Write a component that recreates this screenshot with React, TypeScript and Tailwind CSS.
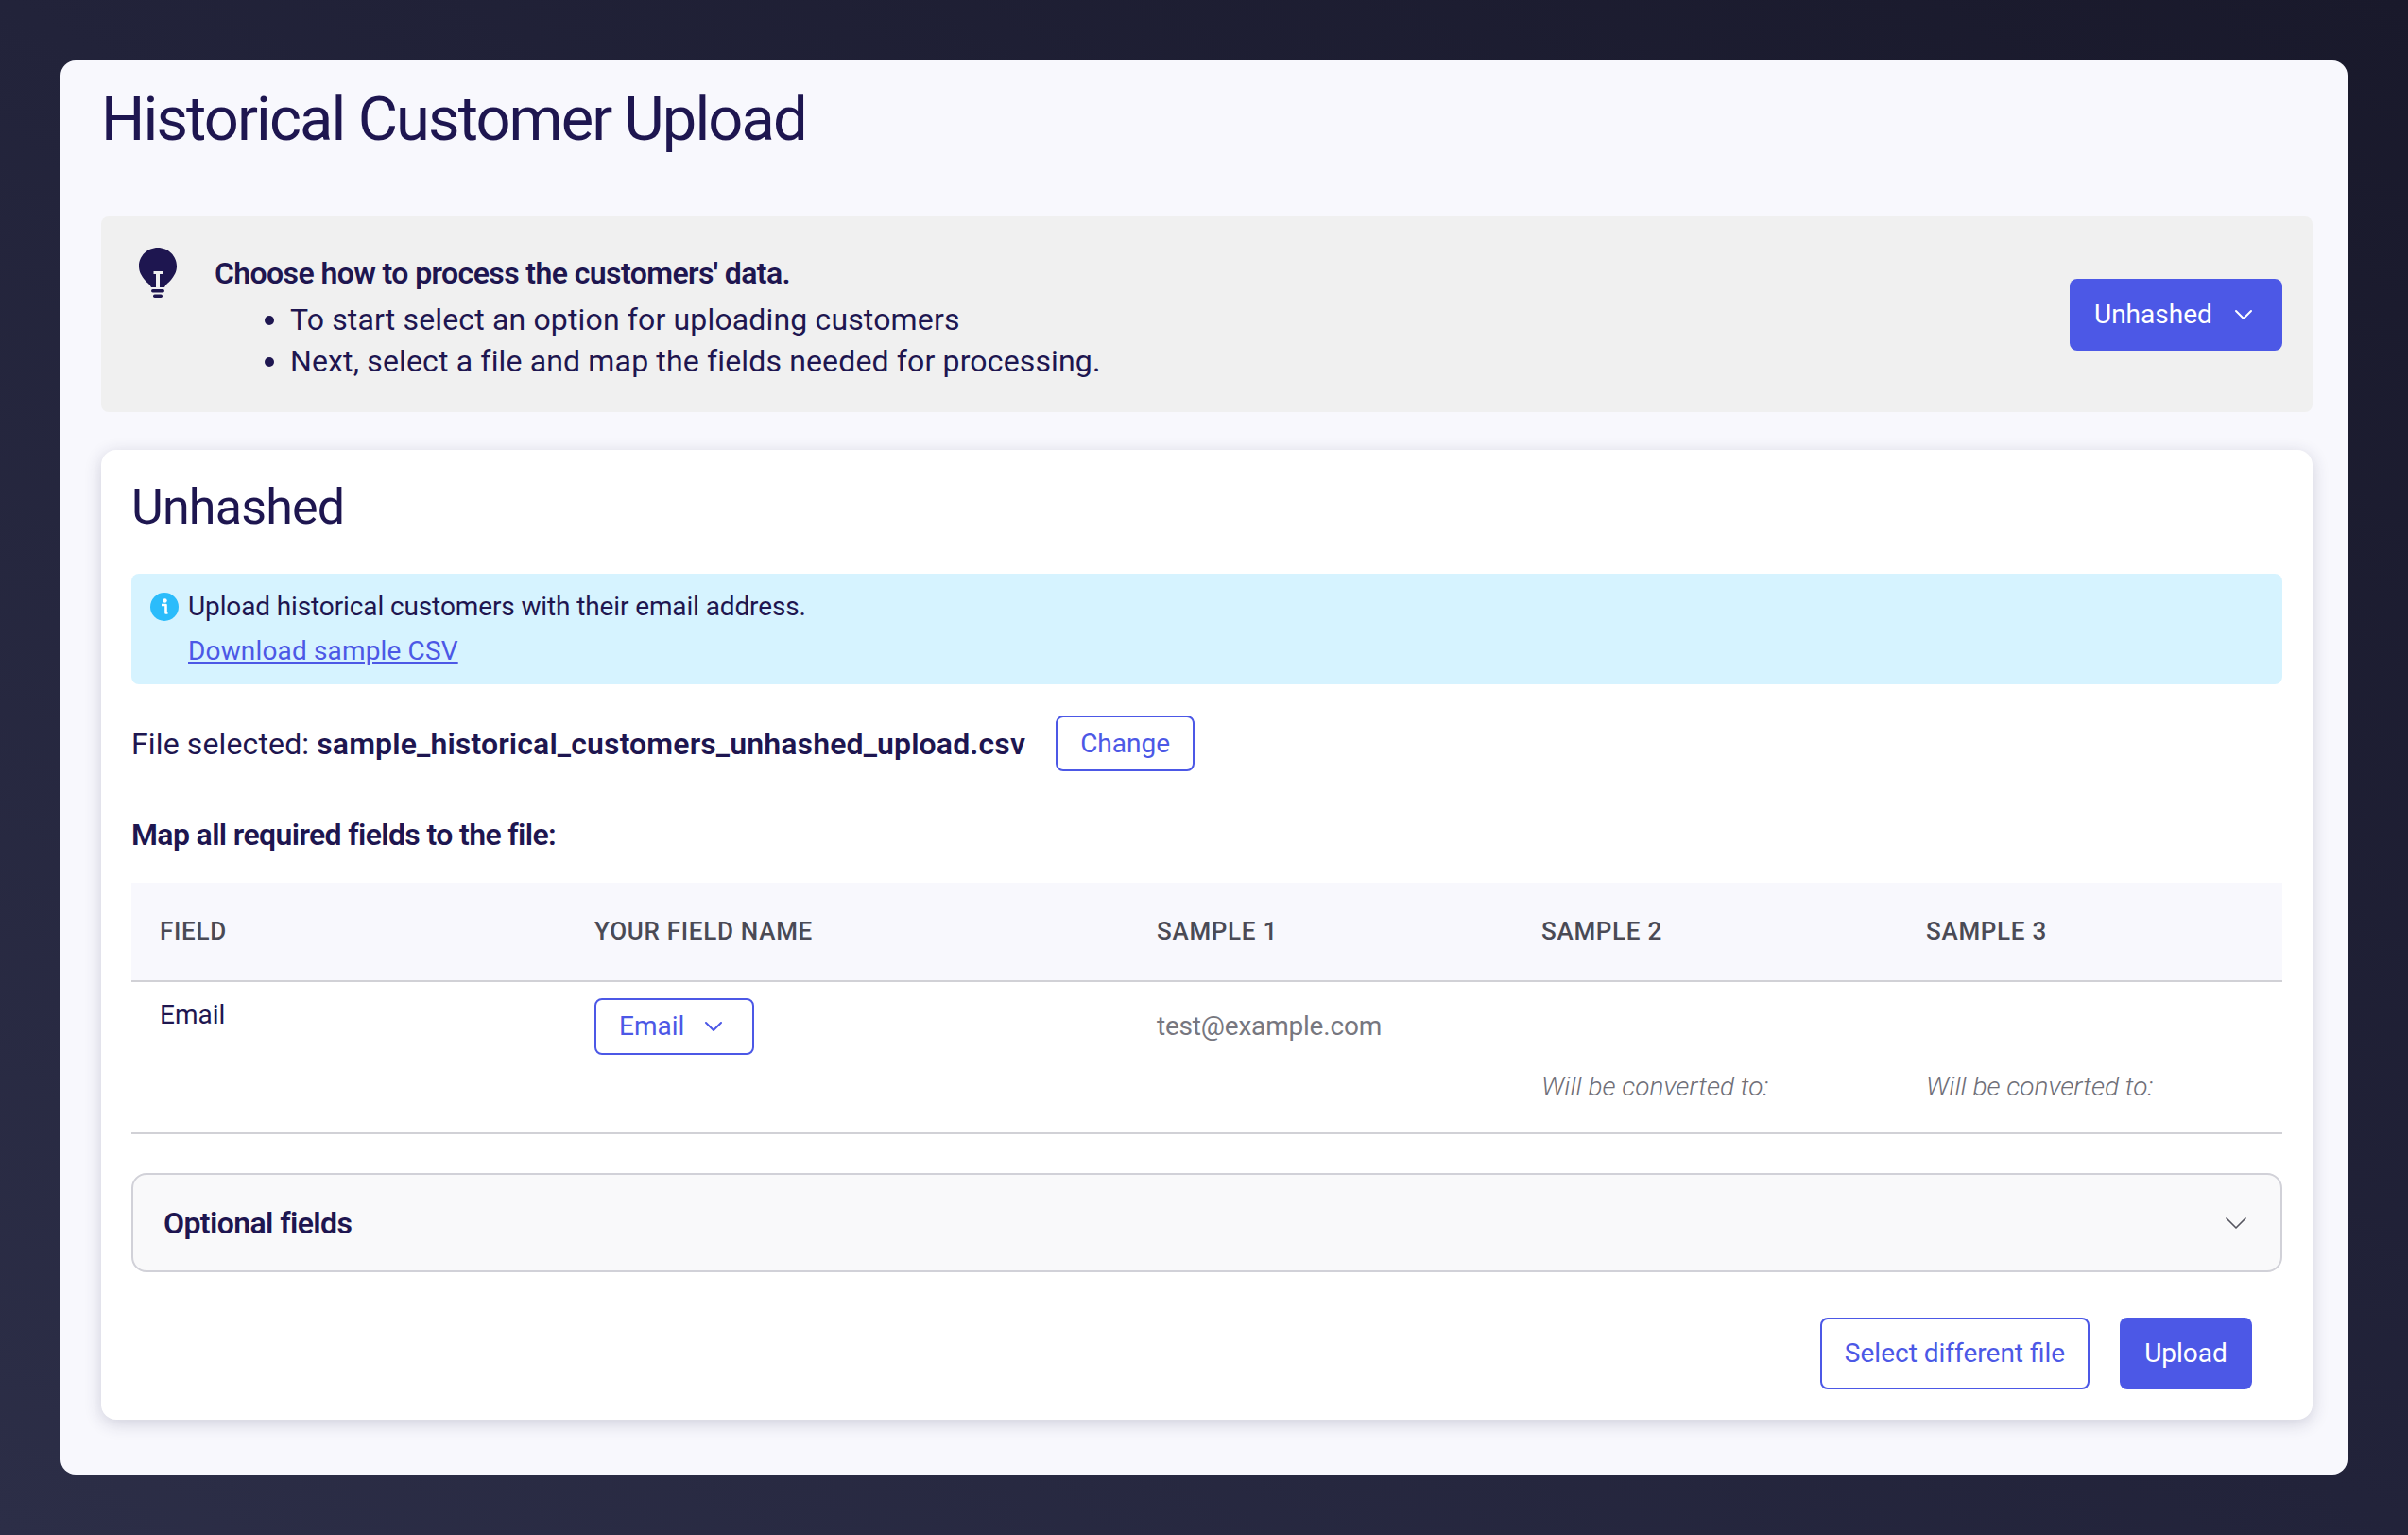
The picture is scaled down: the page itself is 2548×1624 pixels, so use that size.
import { FC } from 'react';
import { ChevronDown } from 'lucide-react';

const Bulb: FC = () => (
  <svg viewBox="0 0 40 54" className="w-[40px] h-[54px] shrink-0" fill="#1e1650">
    <path d="M20 0C9 0 0 8.800 0 19.500c0 6.500 3 10.500 6 14.500 2.500 3.300 6 5 7 8h14c1-3 4.500-4.700 7-8 3-4 6-8 6-14.500C40 8.800 31 0 20 0z" />
    <path d="M15.500 25h9.500v3h-3v14h-4V28h-2.500z" fill="#f0f0f0" />
    <rect x="13" y="44" width="14" height="3.500" rx="1.700" />
    <rect x="15" y="49.500" width="10" height="3.500" rx="1.700" />
  </svg>
);

const InfoIcon: FC = () => (
  <svg viewBox="0 0 30 30" className="w-[30px] h-[30px] shrink-0">
    <circle cx="15" cy="15" r="15" fill="#2bbcfb" />
    <circle cx="15.500" cy="8.500" r="2.200" fill="#fff" />
    <path d="M12 13h4.500v8.500h2" fill="none" stroke="#fff" strokeWidth="2.600" strokeLinejoin="round" />
  </svg>
);

const App: FC = () => {
  return (
    <div className="h-[1624px] w-full overflow-hidden bg-gradient-to-tr from-[#2c2e47] via-[#22233a] to-[#19192b] p-[64px] font-['Roboto',sans-serif] text-[28px] text-[#1e1650]">
      <div className="h-[1496px] rounded-[16px] bg-[#f8f8fd] pl-[43px] pr-[37px]">
        <h1 className="pt-[24px] mb-[65px] text-[65px] leading-[76px] font-normal tracking-[-1.9px]">Historical Customer Upload</h1>

        <div className="flex items-center justify-between h-[207px] rounded-[8px] bg-[#f0f0f0] pr-[32px]">
          <div className="flex self-start text-[32px]">
            <div className="pt-[33px] pl-[40px]"><Bulb /></div>
            <div className="pt-[38px] pl-[40px] leading-[44px]">
              <p className="font-semibold tracking-[-0.6px]">Choose how to process the customers' data.</p>
              <ul className="list-disc mt-[5px] pl-[80px] tracking-[0.15px]">
                <li className="leading-[44px]">To start select an option for uploading customers</li>
                <li className="leading-[44px]">Next, select a file and map the fields needed for processing.</li>
              </ul>
            </div>
          </div>
          <button className="flex items-center h-[76px] w-[225px] pl-[26px] gap-[17px] rounded-[8px] bg-[#4c58e6] text-white font-normal">
            Unhashed
            <ChevronDown className="w-[32px] h-[32px]" strokeWidth={1.500} />
          </button>
        </div>

        <div className="mt-[40px] h-[1026px] rounded-[16px] bg-white px-[32px] shadow-[0_4px_18px_rgba(40,40,80,0.2)]">
          <h2 className="pt-[30px] mb-[39px] text-[52px] leading-[62px] font-normal tracking-[-0.8px]">Unhashed</h2>

          <div className="h-[117px] rounded-[8px] bg-[#d6f3ff] pl-[20px] pt-[15px]">
            <div className="flex items-center gap-[10px] leading-[40px]">
              <InfoIcon />
              <span className="tracking-[-0.12px]">Upload historical customers with their email address.</span>
            </div>
            <a className="block ml-[40px] mt-[7px] leading-[40px] text-[#4c58e6] underline tracking-[0.15px]">Download sample CSV</a>
          </div>

          <div className="mt-[33px] flex items-center">
            <p className="text-[32px] tracking-[0.13px]">File selected: <span className="font-semibold">sample_historical_customers_unhashed_upload.csv</span></p>
            <button className="ml-[32px] h-[59px] w-[147px] rounded-[8px] border-2 border-[#4c58e6] text-[#4c58e6] font-normal">Change</button>
          </div>

          <p className="mt-[47px] text-[32px] leading-[40px] font-semibold tracking-[-0.63px]">Map all required fields to the file:</p>

          <div className="mt-[31px] grid grid-cols-[460px_595px_407px_407px_1fr] h-[105px] items-center border-b-2 border-[#d1d1d6] bg-[#f8f8fd] text-[26px] font-medium text-[#4a4a55] tracking-[0.7px]">
            <div className="pl-[30px]">FIELD</div>
            <div className="pl-[30px]">YOUR FIELD NAME</div>
            <div className="pl-[30px]">SAMPLE 1</div>
            <div className="pl-[30px]">SAMPLE 2</div>
            <div className="pl-[30px]">SAMPLE 3</div>
          </div>
          <div className="grid grid-cols-[460px_595px_407px_407px_1fr] h-[161px] border-b-2 border-[#d1d1d6] leading-[40px]">
            <div className="pl-[30px] pt-[15px]">Email</div>
            <div className="pl-[30px] pt-[17px]">
              <button className="flex items-center h-[60px] w-[169px] pl-[24px] gap-[15px] rounded-[8px] border-2 border-[#4c58e6] text-[#4c58e6] font-normal">
                Email
                <ChevronDown className="w-[32px] h-[32px]" strokeWidth={1.500} />
              </button>
            </div>
            <div className="pl-[30px] pt-[27px] text-[#77777f] tracking-[-0.2px]">test@example.com</div>
            <div className="pl-[30px] pt-[91px] italic font-light text-[#6f6f78]">Will be converted to:</div>
            <div className="pl-[30px] pt-[91px] italic font-light text-[#6f6f78]">Will be converted to:</div>
          </div>

          <div className="mt-[41px] flex items-center justify-between h-[105px] rounded-[16px] border-2 border-[#d1d1d8] bg-[#f9f9fa] pl-[32px] pr-[27px]">
            <span className="text-[32px] font-semibold tracking-[-0.6px]">Optional fields</span>
            <ChevronDown className="w-[40px] h-[40px] text-[#55555f]" strokeWidth={1} />
          </div>

          <div className="mt-[48px] flex justify-end gap-[32px] pr-[32px]">
            <button className="h-[76px] w-[285px] rounded-[8px] border-2 border-[#4c58e6] text-[#4c58e6] font-normal">Select different file</button>
            <button className="h-[76px] w-[140px] rounded-[8px] bg-[#4c58e6] text-white font-normal">Upload</button>
          </div>
        </div>
      </div>
    </div>
  );
};

export default App;
